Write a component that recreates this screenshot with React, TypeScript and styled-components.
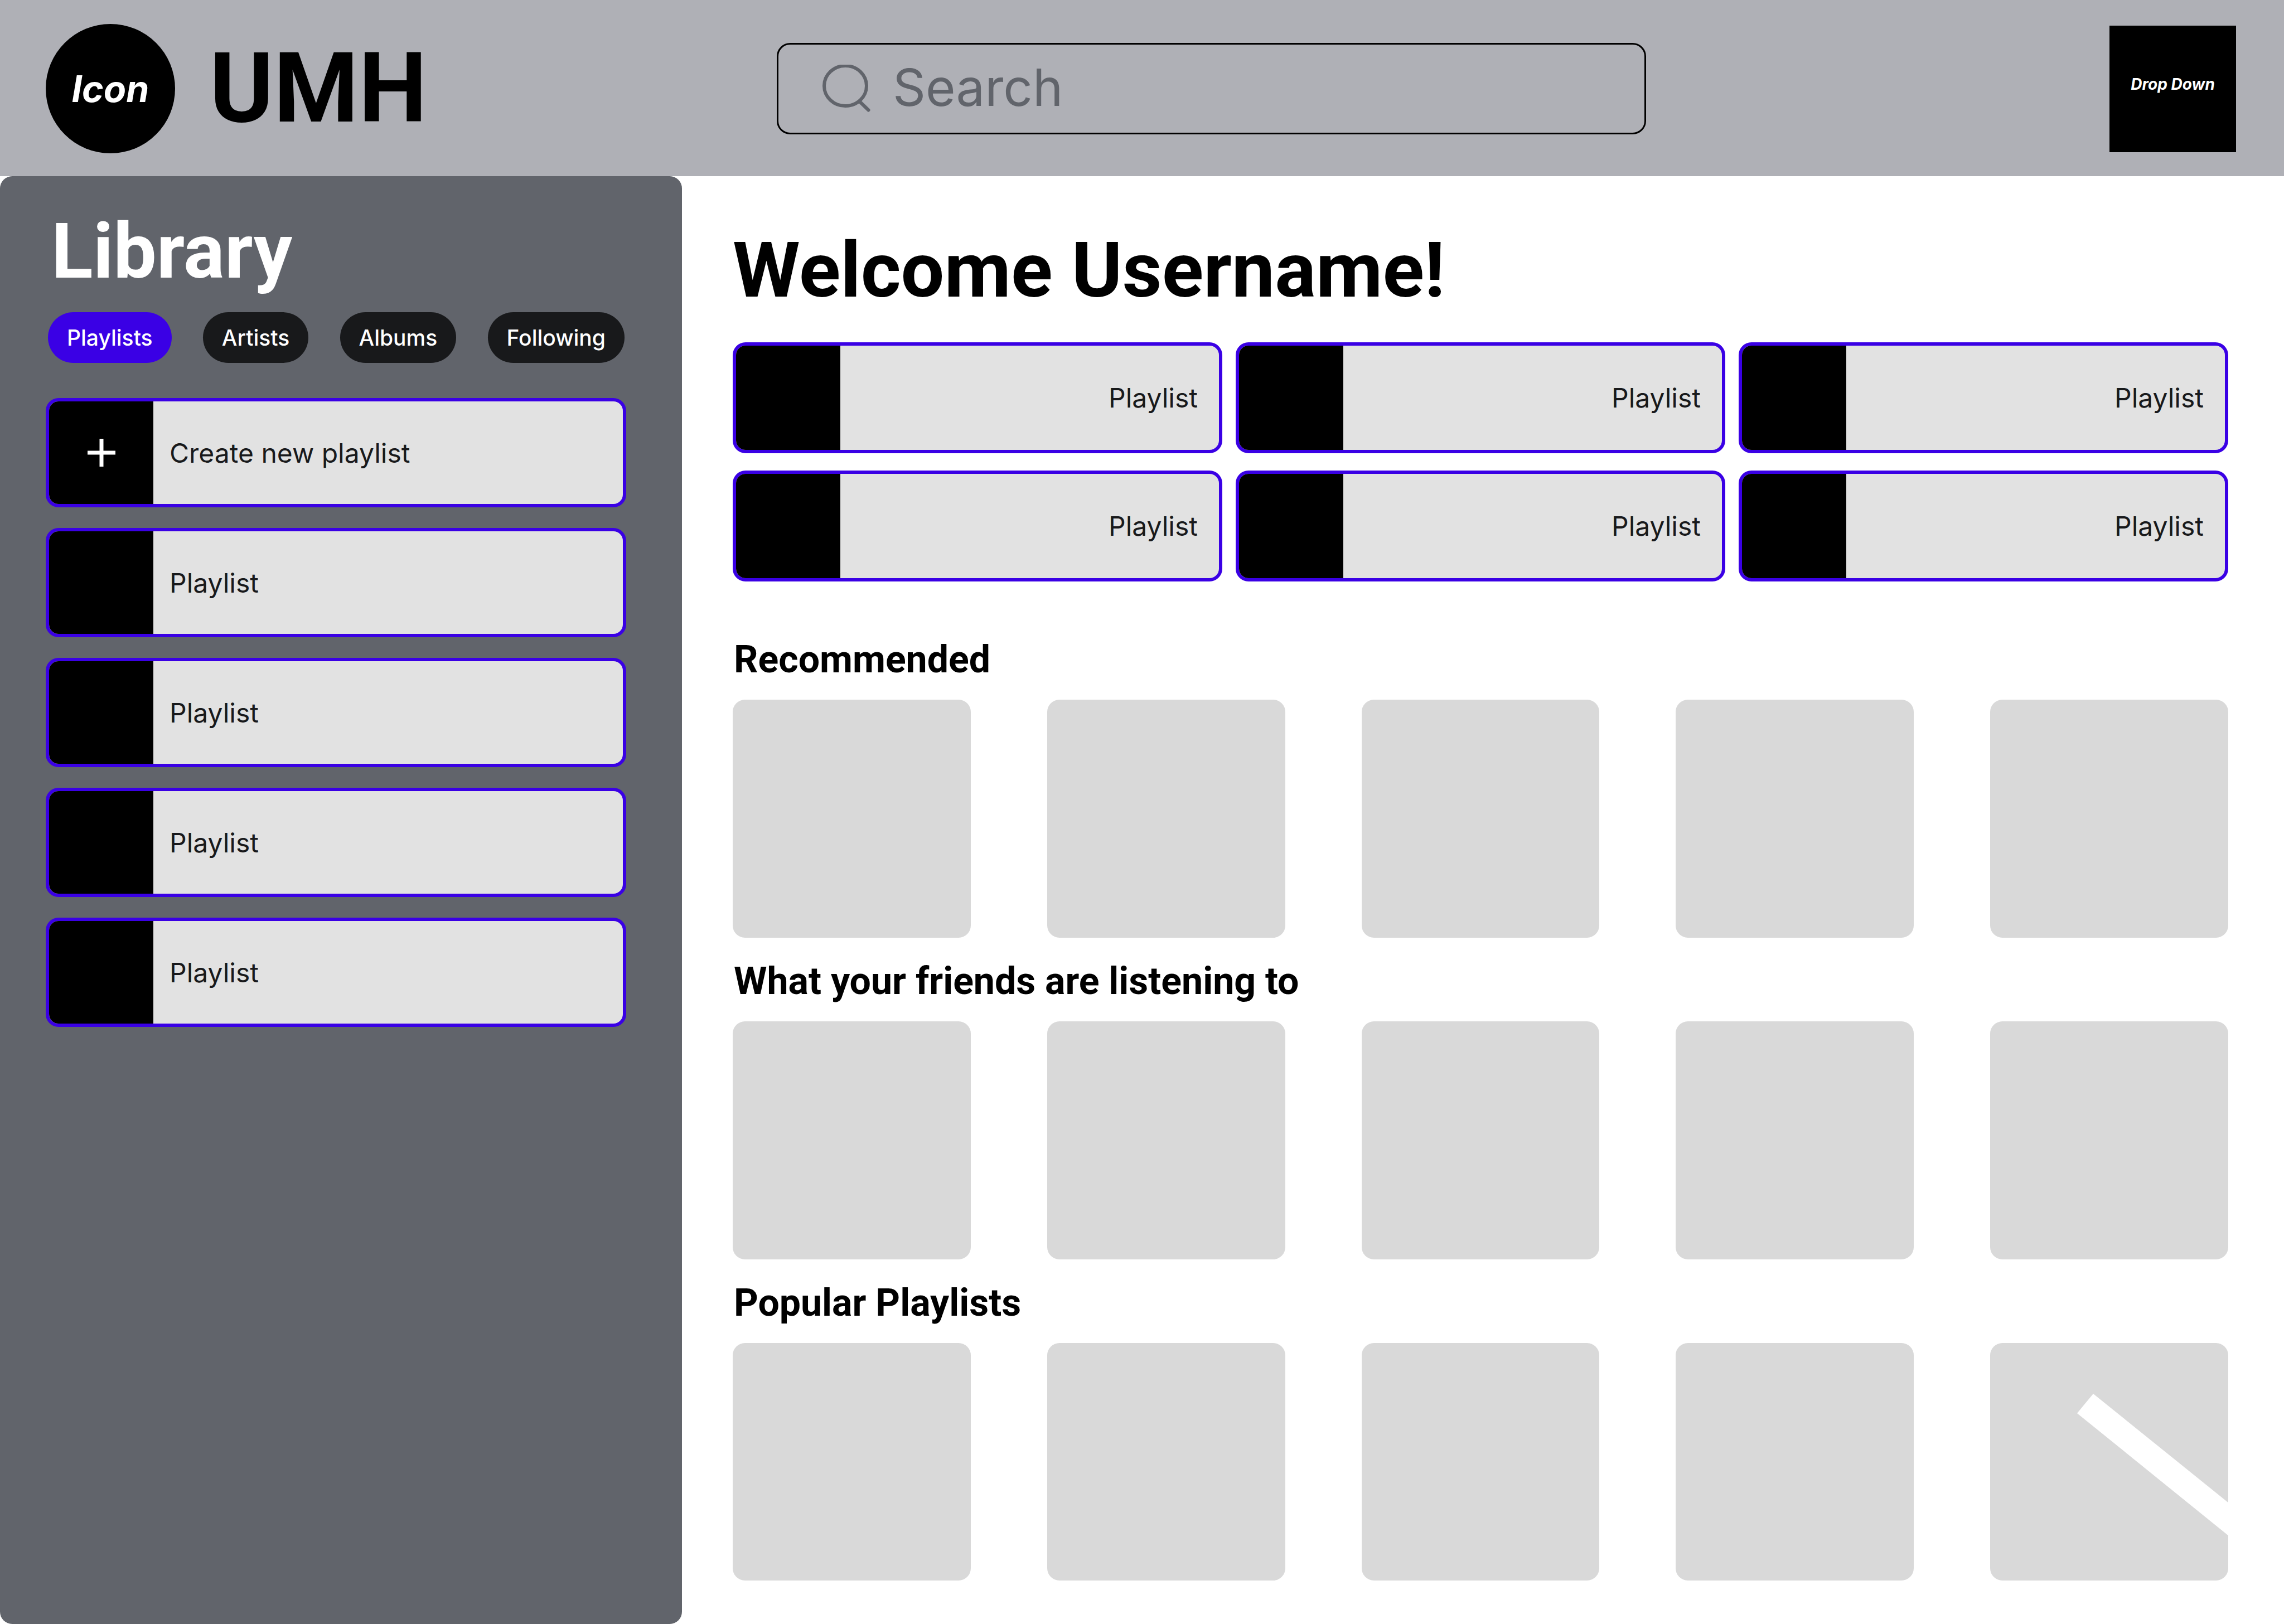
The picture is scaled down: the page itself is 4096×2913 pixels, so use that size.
import React, { useState } from "react";
import styled, { createGlobalStyle, css } from "styled-components";

const color = {
  header: "#afb0b6",
  sidebar: "#61646b",
  accent: "#3a00e5",
  pill: "#18191b",
  card: "#e2e2e2",
  tile: "#d9d9d9",
  ink: "#18191b",
};

const bodyFont = '"Inter", "Noto Sans", sans-serif';
const titleFont = '"Roboto", "Noto Sans", sans-serif';

const GlobalStyle = createGlobalStyle`
  *, *::before, *::after { box-sizing: border-box; }
  body {
    margin: 0;
    background: #fff;
    color: #000;
    font-family: ${bodyFont};
  }
  h1, h2, h3, p, ul { margin: 0; padding: 0; }
  ul { list-style: none; }
  button, input, select { font-family: inherit; margin: 0; }
`;

const Page = styled.div`
  display: flex;
  flex-direction: column;
  min-height: 100vh;
`;

const Header = styled.header`
  display: grid;
  grid-template-columns: 1311px minmax(0, 1559px) 1fr;
  align-items: center;
  padding: 43px 86px 41px 82px;
  background: ${color.header};
`;

const Brand = styled.div`
  display: flex;
  align-items: center;
  gap: 62px;
`;

const Logo = styled.div`
  display: flex;
  align-items: center;
  justify-content: center;
  width: 232px;
  height: 232px;
  border-radius: 50%;
  background: #000;
  color: #fff;
  font-size: 66px;
  font-style: italic;
  font-weight: 700;
`;

const Wordmark = styled.p`
  font-family: ${titleFont};
  font-size: 174px;
  font-weight: 700;
  line-height: 176px;
`;

const SearchBox = styled.label`
  display: flex;
  align-items: center;
  gap: 40px;
  height: 164px;
  padding: 0 40px 0 79px;
  border: 3px solid #000;
  border-radius: 24px;
  color: ${color.sidebar};
`;

const SearchIcon = styled.svg`
  flex: none;
  width: 86px;
  height: 86px;
  fill: none;
  stroke: currentColor;
  stroke-width: 6;
  stroke-linecap: round;
`;

const SearchInput = styled.input`
  flex: 1;
  min-width: 0;
  height: 100%;
  padding: 0 0 6px;
  border: 0;
  outline: 0;
  background: transparent;
  color: inherit;
  font-size: 92px;

  &::placeholder {
    color: inherit;
    opacity: 1;
  }
`;

const AccountMenu = styled.select`
  justify-self: end;
  width: 227px;
  height: 227px;
  padding: 0 0 17px;
  border: 0;
  border-radius: 0;
  appearance: none;
  background: #000;
  color: #fff;
  font-size: 28px;
  font-style: italic;
  font-weight: 700;
  text-align: center;
  text-align-last: center;
`;

const Body = styled.div`
  display: grid;
  flex: 1;
  grid-template-columns: 1223px minmax(0, 1fr);
`;

const Sidebar = styled.aside`
  display: flex;
  flex-direction: column;
  padding: 63px 100px 63px 82px;
  border-radius: 22px;
  background: ${color.sidebar};
`;

const PageTitle = styled.h1`
  font-family: ${titleFont};
  font-size: 138px;
  font-weight: 700;
  line-height: 144px;
`;

const LibraryTitle = styled(PageTitle).attrs({ as: "h2" })`
  padding-left: 10px;
  color: #fff;
`;

const Filters = styled.div`
  display: flex;
  justify-content: space-between;
  padding: 37px 3px 63px 4px;
`;

const Pill = styled.button<{ $active: boolean }>`
  height: 91px;
  padding: 0 34px;
  border: 0;
  border-radius: 46px;
  background: ${(p) => (p.$active ? color.accent : color.pill)};
  color: #fff;
  font-size: 39px;
  font-weight: 500;
`;

const LibraryList = styled.ul`
  display: grid;
  gap: 37px;
`;

const Shortcuts = styled.ul`
  display: grid;
  grid-template-columns: repeat(3, minmax(0, 1fr));
  gap: 31px 24px;
  padding: 57px 0 100px;
`;

const Card = styled.button<{ $alignEnd?: boolean }>`
  display: flex;
  align-items: center;
  width: 100%;
  height: 196px;
  padding: 0;
  overflow: hidden;
  border: 6px solid ${color.accent};
  border-radius: 23px;
  background: ${color.card};
  color: ${color.ink};
  font-size: 48px;
  text-align: left;

  ${(p) =>
    p.$alignEnd &&
    css`
      height: 199px;
      text-align: right;
    `}
`;

const Cover = styled.span`
  display: flex;
  flex: none;
  align-items: center;
  justify-content: center;
  width: 187px;
  height: 100%;
  background: #000;
`;

const PlusIcon = styled.svg`
  width: 50px;
  height: 50px;
  stroke: #fff;
  stroke-width: 7;
`;

const CardLabel = styled.span`
  flex: 1;
  padding: 0 38px 0 29px;
`;

const Main = styled.main`
  padding: 97px 100px 77px 91px;
`;

const Shelves = styled.div`
  display: grid;
  gap: 38px;
`;

const ShelfTitle = styled.h2`
  padding-left: 2px;
  font-family: ${titleFont};
  font-size: 68px;
  font-weight: 700;
  line-height: 80px;
`;

const Tiles = styled.ul`
  display: grid;
  grid-template-columns: repeat(5, minmax(0, 1fr));
  gap: 137px;
  padding-top: 32px;
`;

const Tile = styled.li`
  aspect-ratio: 1;
  overflow: hidden;
  border-radius: 22px;
  background: ${color.tile};
`;

const Slash = styled.svg`
  display: block;
  width: 100%;
  height: 100%;
  fill: #fff;
`;

const filters = ["Playlists", "Artists", "Albums", "Following"];
const library = ["Playlist", "Playlist", "Playlist", "Playlist"];
const shortcuts = Array.from({ length: 6 }, () => "Playlist");
const shelves = [
  { title: "Recommended", slashed: false },
  { title: "What your friends are listening to", slashed: false },
  { title: "Popular Playlists", slashed: true },
];

function Shelf({ title, slashed }: { title: string; slashed: boolean }) {
  return (
    <section>
      <ShelfTitle>{title}</ShelfTitle>
      <Tiles>
        {[0, 1, 2, 3, 4].map((n) => (
          <Tile key={n}>
            {slashed && n === 4 && (
              <Slash viewBox="0 0 427 427" aria-hidden="true">
                <polygon points="185,91 428,287 428,346 156,126" />
              </Slash>
            )}
          </Tile>
        ))}
      </Tiles>
    </section>
  );
}

export default function App() {
  const [filter, setFilter] = useState("Playlists");

  return (
    <Page>
      <GlobalStyle />
      <Header>
        <Brand>
          <Logo>Icon</Logo>
          <Wordmark>UMH</Wordmark>
        </Brand>
        <SearchBox>
          <SearchIcon viewBox="0 0 86 86" aria-hidden="true">
            <ellipse cx="41" cy="38" rx="38" ry="36" />
            <path d="M67 66.5 82.5 81.5" />
          </SearchIcon>
          <SearchInput type="search" placeholder="Search" aria-label="Search" />
        </SearchBox>
        <AccountMenu aria-label="Drop Down">
          <option>Drop Down</option>
        </AccountMenu>
      </Header>
      <Body>
        <Sidebar>
          <LibraryTitle>Library</LibraryTitle>
          <Filters>
            {filters.map((name) => (
              <Pill
                key={name}
                type="button"
                $active={name === filter}
                aria-pressed={name === filter}
                onClick={() => setFilter(name)}
              >
                {name}
              </Pill>
            ))}
          </Filters>
          <LibraryList>
            <li>
              <Card type="button">
                <Cover>
                  <PlusIcon viewBox="0 0 50 50" aria-hidden="true">
                    <path d="M25 0V50M0 25H50" />
                  </PlusIcon>
                </Cover>
                <CardLabel>Create new playlist</CardLabel>
              </Card>
            </li>
            {library.map((name, i) => (
              <li key={i}>
                <Card type="button">
                  <Cover />
                  <CardLabel>{name}</CardLabel>
                </Card>
              </li>
            ))}
          </LibraryList>
        </Sidebar>
        <Main>
          <PageTitle>Welcome Username!</PageTitle>
          <Shortcuts>
            {shortcuts.map((name, i) => (
              <li key={i}>
                <Card type="button" $alignEnd>
                  <Cover />
                  <CardLabel>{name}</CardLabel>
                </Card>
              </li>
            ))}
          </Shortcuts>
          <Shelves>
            {shelves.map((shelf) => (
              <Shelf key={shelf.title} {...shelf} />
            ))}
          </Shelves>
        </Main>
      </Body>
    </Page>
  );
}
